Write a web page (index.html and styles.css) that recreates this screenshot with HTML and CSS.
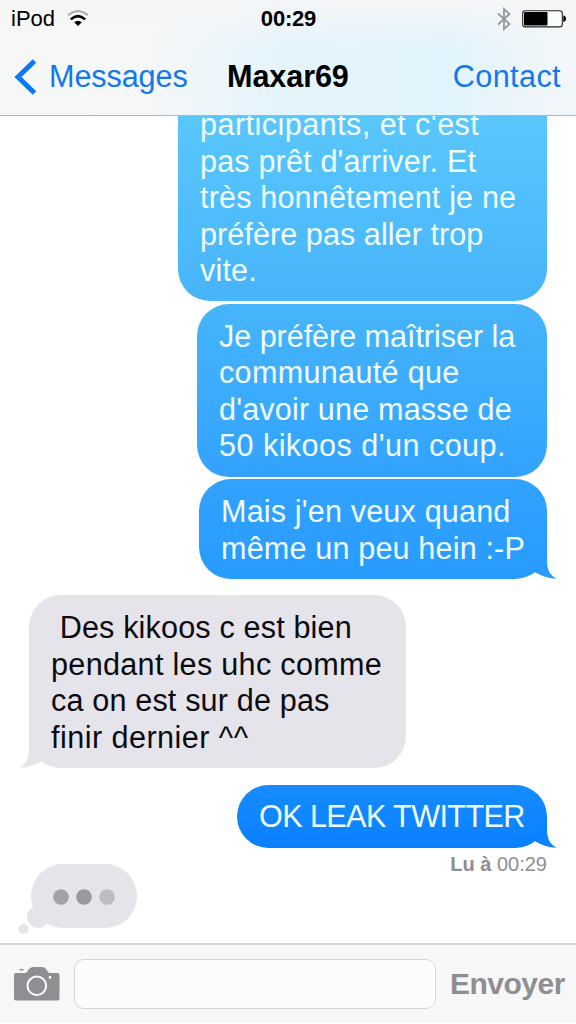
FILE: index.html
```html
<!DOCTYPE html>
<html lang="fr">
<head>
<meta charset="utf-8">
<title>Messages</title>
<link rel="stylesheet" href="styles.css">
</head>
<body>
<div class="phone">
  <header class="header">
    <div class="status">
      <div class="carrier">iPod
        <svg class="wifi" width="22" height="17" viewBox="0 0 22 17" fill="none">
          <path d="M1 5.2Q11-3 21 5.2" stroke="#b0b0b0" stroke-width="2.2"/>
          <path d="M3.8 9.4Q11 3 18.2 9.4" stroke="#000" stroke-width="2.6"/>
          <path d="M7.2 12.2Q11 9.2 14.8 12.2L11 16Z" fill="#000"/>
        </svg>
      </div>
      <div class="clock">00:29</div>
      <div class="indicators">
        <svg width="14" height="24" viewBox="0 0 14 24" fill="none" stroke="#93979b" stroke-width="1.8"><path d="M1 6.5L12.5 17L7 22V2L12.5 7L1 17.5"/></svg>
        <svg width="44" height="18" viewBox="0 0 44 18">
          <rect x=".7" y=".7" width="39.6" height="16.2" rx="2.5" fill="#fafdff" stroke="#222" stroke-width="1.1"/>
          <rect x="2" y="2" width="23.5" height="13.6" rx="1" fill="#000"/>
          <path d="M41.3 5.6Q44 6 44 8.8T41.3 12Z" fill="#000"/>
        </svg>
      </div>
    </div>
    <nav class="nav">
      <a class="back"><svg width="22" height="36" viewBox="0 0 22 36"><path d="M20.5 2L4 18L20.5 34" fill="none" stroke="#0b79f7" stroke-width="5"/></svg><span>Messages</span></a>
      <h1 class="title">Maxar69</h1>
      <a class="contact">Contact</a>
    </nav>
  </header>

  <main class="thread">
    <div class="bubble sent first">
      <div class="wider">participants, et c'est</div>
      <div>pas prêt d'arriver. Et</div>
      <div>très honnêtement je ne</div>
      <div class="narrow">préfère pas aller trop</div>
      <div>vite.</div>
    </div>
    <div class="bubble sent second">
      <div class="narrower">Je préfère maîtriser la</div>
      <div class="wide">communauté que</div>
      <div>d'avoir une masse de</div>
      <div class="wider">50 kikoos d'un coup.</div>
    </div>
    <div class="bubble sent third">
      <div>Mais j'en veux quand</div>
      <div>même un peu hein :-P</div>
      <svg class="tail" width="42" height="40" viewBox="0 0 42 40"><path d="M32 8V22C32 31 35.5 37 41.8 39.7Q31 39.8 20 33.3L10 28V8Z" fill="#299cff"/></svg>
    </div>
    <div class="bubble received">
      <div>&nbsp;Des kikoos c est bien</div>
      <div class="wide">pendant les uhc comme</div>
      <div>ca on est sur de pas</div>
      <div class="wider">finir dernier ^^</div>
      <svg class="tail" width="42" height="40" viewBox="0 0 42 40"><path d="M32 8V22C32 31 35.5 37 41.8 39.7Q31 39.8 20 33.3L10 28V8Z" fill="#e5e4ea"/></svg>
    </div>
    <div class="bubble sent last">
      <div class="caps">OK LEAK TWITTER</div>
      <svg class="tail" width="42" height="40" viewBox="0 0 42 40"><path d="M32 10V22C32 31 35.5 37 41.8 39.7Q31 39.8 20 33.3L18 28Z" fill="#0c82ff"/></svg>
    </div>
    <div class="receipt"><b>Lu à</b> 00:29</div>
    <svg class="typing" width="120" height="72" viewBox="0 0 120 72">
      <g fill="#e5e4ea"><rect x="13" y="0" width="106" height="64" rx="32"/><circle cx="20" cy="53" r="11"/><circle cx="5.5" cy="65" r="5"/></g>
      <circle cx="43" cy="33" r="7.8" fill="#a2a2a6"/><circle cx="66" cy="33" r="7.8" fill="#99989d"/><circle cx="89" cy="33" r="7.8" fill="#bdbcc1"/>
    </svg>
  </main>

  <footer class="composer">
    <svg width="46" height="34" viewBox="0 0 46 34">
      <path d="M2 6H11.5Q13 5.5 14.5 2.5Q16 0 19 0H28Q31 0 32.5 2.5Q33.5 5.5 35.5 6H43.5Q45.5 6 45.5 8V31.5Q45.5 33.5 43.5 33.5H2Q0 33.5 0 31.5V8Q0 6 2 6Z" fill="#8e8e93"/>
      <path d="M5 3.6Q5 1.7 7.5 1.7T10 3.6Z" fill="#8e8e93"/>
      <circle cx="22.8" cy="18.8" r="9.3" fill="none" stroke="#fff" stroke-width="2"/>
      <circle cx="36" cy="10.4" r="1.3" fill="#fff"/>
    </svg>
    <div class="field"></div>
    <div class="send">Envoyer</div>
  </footer>
</div>
</body>
</html>
```
FILE: styles.css
```css
* { box-sizing: border-box; }
body { margin: 0; background: #fff; font-family: "Liberation Sans", Arial, sans-serif; }
.phone { width: 576px; height: 1024px; display: flex; flex-direction: column; overflow: hidden; }

.header {
  flex: none;
  height: 116px;
  border-bottom: 1px solid #aeb4b8;
  background:
    linear-gradient(rgba(246, 246, 247, .9) 0%, rgba(246, 246, 247, 0) 42%),
    linear-gradient(90deg, #f7f7f7 0%, #f5f7f8 26%, #e5f4fc 48%, #e2f4fd 78%, #eff6f9 94%, #f3f7f9 100%);
}
.status { height: 38px; display: grid; grid-template-columns: 1fr auto 1fr; align-items: center; padding: 0 10px 0 11px; font-size: 22px; }
.carrier { display: flex; align-items: center; gap: 12px; }
.wifi { margin-top: -2px; }
.clock { font-weight: bold; letter-spacing: -.2px; }
.indicators { display: flex; justify-content: flex-end; align-items: center; gap: 11px; }
.nav { height: 77px; display: grid; grid-template-columns: 213px auto 1fr; align-items: center; padding: 0 15px 0 14px; font-size: 30.6px; color: #1279ec; }
.back { display: flex; align-items: center; gap: 13px; letter-spacing: -.1px; }
.title { margin: 0; font-size: 30.6px; font-weight: bold; letter-spacing: -.1px; color: #000; }
.contact { text-align: right; letter-spacing: .4px; }

.thread { flex: none; height: 827px; overflow: hidden; display: flex; flex-direction: column; padding: 0 29px; }
.bubble {
  position: relative;
  isolation: isolate;
  flex: none;
  padding: 14px 22px 0;
  border-radius: 32px;
  font-size: 30.6px;
  line-height: 36.5px;
  letter-spacing: .15px;
  white-space: nowrap;
}
.narrower { letter-spacing: -.06px; }
.narrow { letter-spacing: .05px; }
.wide { letter-spacing: .3px; }
.wider { letter-spacing: .45px; }
.caps { letter-spacing: -.6px; }
.sent { align-self: flex-end; color: #f0fdff; }
.first { width: 369px; height: 209px; margin-top: -24px; border-radius: 0 0 32px 32px; background: linear-gradient(#5ccafb, #47b4fb); }
.second { width: 350px; height: 173px; margin-top: 2.5px; background: linear-gradient(#46b5fb, #32a2fe); }
.third { width: 348px; height: 99.5px; margin-top: 2.5px; background: linear-gradient(#32a2fe, #289bff); }
.received { align-self: flex-start; width: 377px; height: 173px; margin-top: 16.5px; background: #e5e4ea; color: #0b0b0f; }
.last { width: 310px; height: 63px; margin-top: 16.5px; padding-top: 13px; background: linear-gradient(#168cff, #0a80ff); }
.tail { position: absolute; z-index: -1; right: -10px; bottom: 0; }
.received .tail { right: auto; left: -10px; transform: scaleX(-1); }
.receipt { align-self: flex-end; margin-top: 5px; height: 23px; font-size: 20px; line-height: 23px; color: #8e8e93; }
.typing { flex: none; margin: -11.5px 0 0 -11px; }

.composer { flex: none; height: 81px; display: flex; align-items: center; padding: 0 11px 0 14px; border-top: 2px solid #d3d3d5; border-bottom: 2px solid #fff; background: #f7f7f7; }
.field { width: 362px; height: 50px; margin-left: 14px; border: 1.5px solid #d5d5d8; border-radius: 10px; background: #fcfcfc; }
.send { margin-left: 14px; font-size: 30px; font-weight: bold; letter-spacing: -.5px; color: #8e8e93; }
```
